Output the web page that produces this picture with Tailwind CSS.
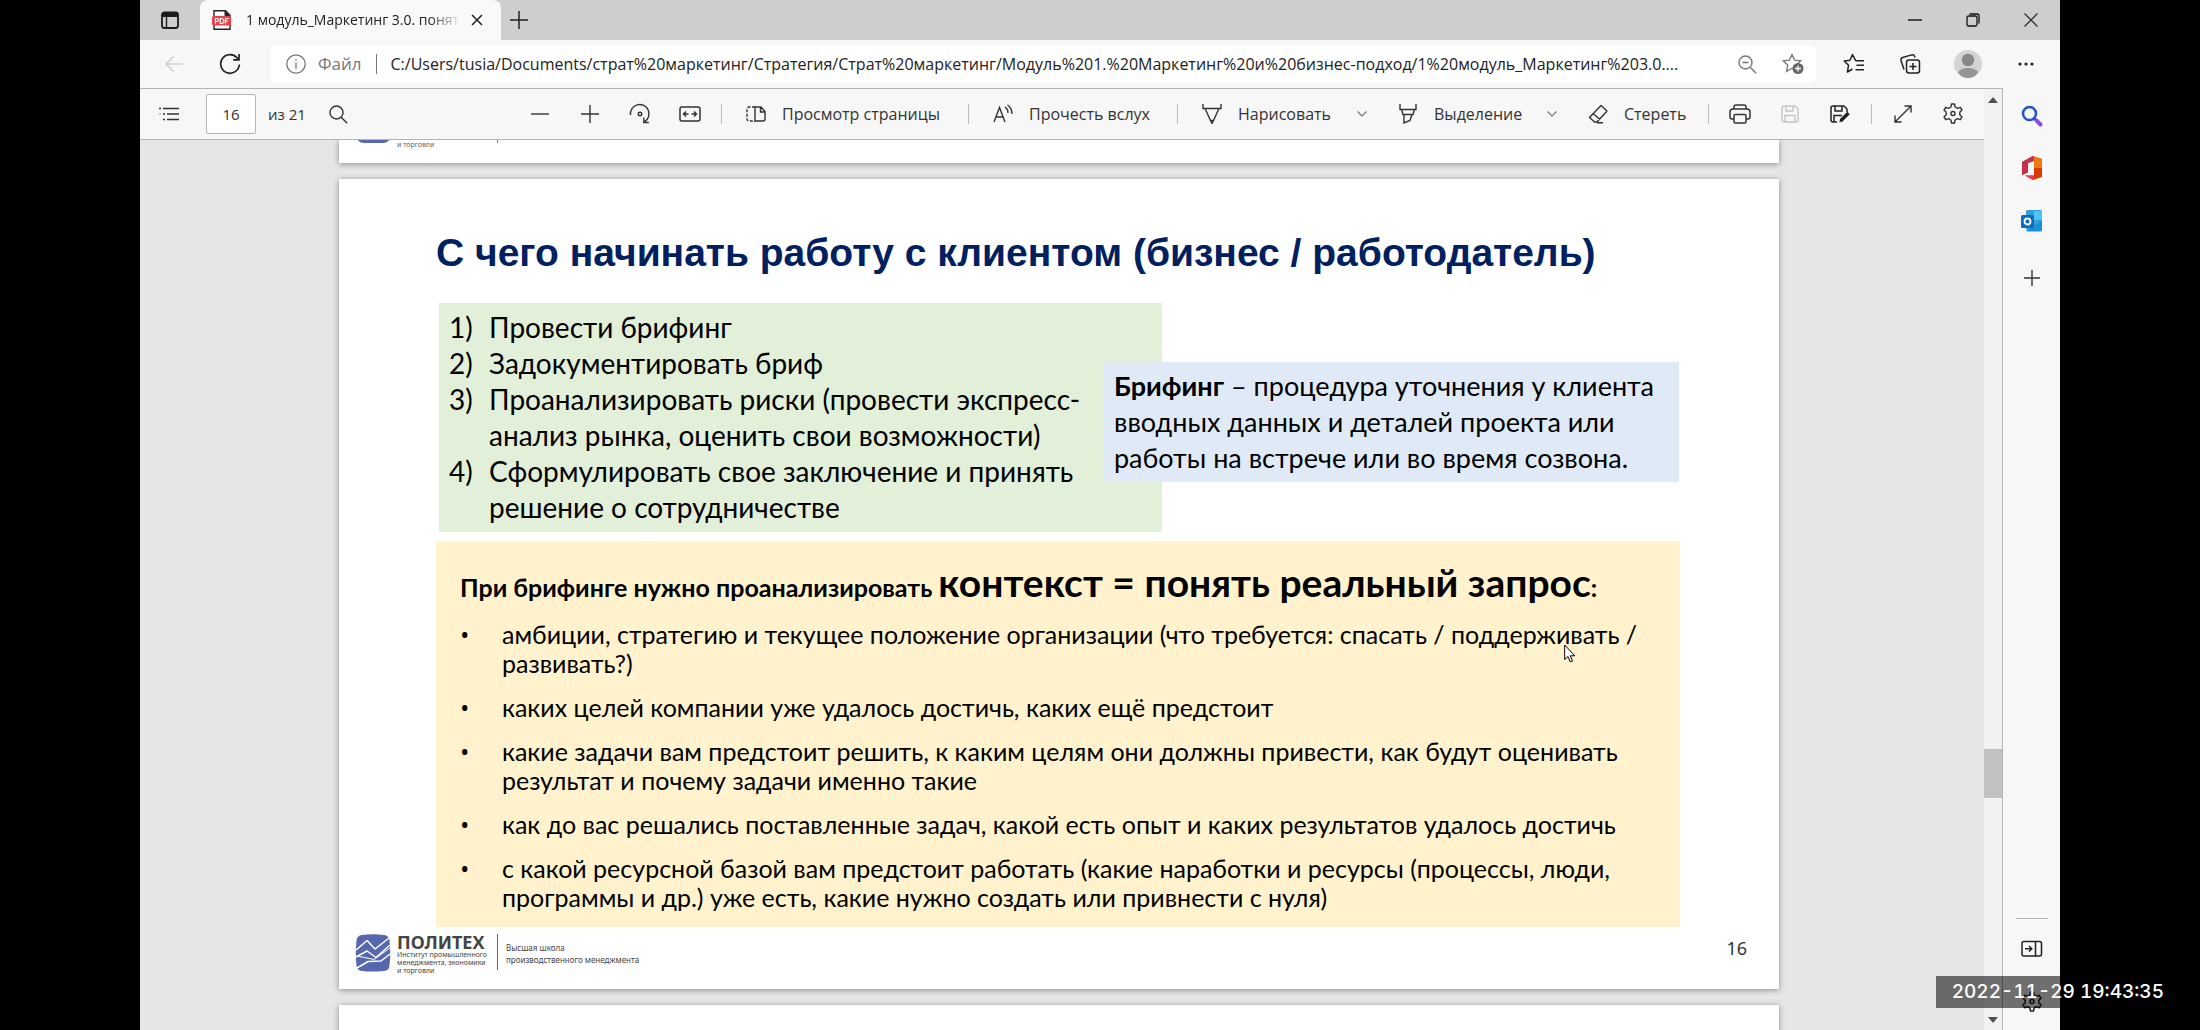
<!DOCTYPE html>
<html lang="ru">
<head>
    <meta charset="UTF-8">
    <meta name="viewport" content="width=device-width, initial-scale=1.0">
    <title>1 модуль_Маркетинг 3.0. понятие</title>
    <script src="https://cdn.jsdelivr.net/npm/@tailwindcss/browser@4"></script>
</head>
<body class="bg-black h-screen overflow-hidden px-[140px] font-['Open_Sans','Noto_Sans',sans-serif] text-black">

<div class="h-full flex flex-col bg-[#f7f7f7]">

    <!-- Tab strip -->
    <div class="h-10 shrink-0 flex items-center bg-[#cfcece]">
        <button aria-label="Вкладки" class="w-[60px] h-full flex items-center justify-center">
            <svg class="w-5 h-5" viewBox="0 0 20 20" fill="none" stroke="#1b1b1b" stroke-width="1.8"><rect x="2" y="2.5" width="16" height="15.5" rx="2.5"/><path d="M2 5h16" stroke-width="4"/><path d="M6.500 6v12" stroke-width="1.4"/></svg>
        </button>
        <div class="w-[301px] h-full rounded-t-lg bg-[#f9f9f9] flex items-center pl-3 pr-3">
            <svg class="w-5 h-5 shrink-0" viewBox="0 0 20 20"><path d="M2 .8h11.500l4.500 4.500v14H2z" fill="#fff" stroke="#222" stroke-width="1.400"/><path d="M13 .8v5h5" fill="#222" stroke="#222"/><rect x="0" y="6" width="19" height="9.500" rx="1.500" fill="#e8414c"/><path d="M3.500 13.500v-5h1.500a1.400 1.400 0 0 1 0 3H3.500M8.300 8.500v5h1a2.500 2.500 0 0 0 0-5zM13.500 13.500v-5h3M13.500 11h2.500" fill="none" stroke="#fff" stroke-width="1.200"/></svg>
            <span class="ml-3.5 flex-1 whitespace-nowrap text-sm text-[#222] mask-r-from-85%">1 модуль_Маркетинг 3.0. понят</span>
            <button aria-label="Закрыть вкладку" class="ml-1 w-6 h-6 flex items-center justify-center">
                <svg class="w-3 h-3" viewBox="0 0 12 12" stroke="#222" stroke-width="1.500"><path d="M1 1l10 10M11 1L1 11"/></svg>
            </button>
        </div>
        <button aria-label="Новая вкладка" class="w-9 h-full flex items-center justify-center">
            <svg class="w-[18px] h-[18px]" viewBox="0 0 18 18" stroke="#222" stroke-width="1.500"><path d="M9 0v18M0 9h18"/></svg>
        </button>
        <div class="ml-auto flex h-full">
            <button aria-label="Свернуть" class="w-[58px] flex items-center justify-center"><svg class="w-3.5 h-3.5" viewBox="0 0 14 14" stroke="#111" stroke-width="1.400"><path d="M0 7h14"/></svg></button>
            <button aria-label="Восстановить" class="w-[58px] flex items-center justify-center"><svg class="w-3.5 h-3.5" viewBox="0 0 14 14" fill="none" stroke="#111" stroke-width="1.300"><rect x="1" y="3" width="10" height="10" rx="1.500"/><path d="M3.500 1h7.500a2 2 0 0 1 2 2v7.500"/></svg></button>
            <button aria-label="Закрыть" class="w-[58px] flex items-center justify-center"><svg class="w-3.5 h-3.5" viewBox="0 0 14 14" stroke="#333" stroke-width="1.300"><path d="M.5.5l13 13M13.500.5l-13 13"/></svg></button>
        </div>
    </div>

    <!-- Address bar -->
    <div class="h-12 shrink-0 flex items-center">
        <button aria-label="Назад" class="ml-1.5 w-14 h-full flex items-center justify-center">
            <svg class="w-5 h-5" viewBox="0 0 20 20" fill="none" stroke="#d2d2d2" stroke-width="1.500"><path d="M19 10H2M9.500 2.500L2 10l7.500 7.500"/></svg>
        </button>
        <button aria-label="Обновить" class="w-14 h-full flex items-center justify-center">
            <svg class="w-[22px] h-[22px]" viewBox="0 0 22 22" fill="none" stroke="#222" stroke-width="1.700"><path d="M20.300 11.500A9.300 9.300 0 1 1 18 4.800l1.500 1.500"/><path d="M20 1v5.800h-5.800"/></svg>
        </button>
        <div class="ml-3 flex-1 min-w-0 h-[38px] rounded-md bg-white flex items-center pl-4 text-base">
            <svg class="w-5 h-5 shrink-0" viewBox="0 0 20 20" fill="none" stroke="#777" stroke-width="1.300"><circle cx="10" cy="10" r="9.200"/><path d="M10 8.500V15M10 5v1.600"/></svg>
            <span class="ml-3 text-[17px] text-[#777]">Файл</span>
            <span class="mx-3.5 w-px h-5 bg-[#777]"></span>
            <input aria-label="Адрес" class="flex-1 min-w-0 outline-none text-[#222] text-ellipsis" value="C:/Users/tusia/Documents/страт%20маркетинг/Стратегия/Страт%20маркетинг/Модуль%201.%20Маркетинг%20и%20бизнес-подход/1%20модуль_Маркетинг%203.0....">
            <button aria-label="Масштаб" class="w-[46px] flex justify-center">
                <svg class="w-[19px] h-[19px]" viewBox="0 0 19 19" fill="none" stroke="#777" stroke-width="1.400"><circle cx="7.500" cy="7.500" r="6.500"/><path d="M4.500 7.500h6M12.200 12.200l6 6"/></svg>
            </button>
            <button aria-label="Добавить в избранное" class="w-[46px] flex justify-center">
                <svg class="w-[22px] h-[22px]" viewBox="0 0 22 22"><path d="M10 1.500l2.600 5.600 6.200.7-4.600 4.200 1.200 6L10 15.200 4.500 18.500l1.300-6.300L1.200 7.800l6.200-.7z" fill="none" stroke="#777" stroke-width="1.300"/><circle cx="16" cy="15.500" r="5.500" fill="#666"/><path d="M16 12.500v6M13 15.500h6" stroke="#fff" stroke-width="1.300"/></svg>
            </button>
        </div>
        <button aria-label="Избранное" class="ml-2.5 w-[56px] h-full flex items-center justify-center">
            <svg class="w-[22px] h-[22px]" viewBox="0 0 22 22" fill="none" stroke="#222" stroke-width="1.500" stroke-linejoin="round"><path d="M12.800 7.800L9.500 1.500 7 7.300l-5.800.7 4.300 4.300L4.400 19l5-3"/><path d="M12.500 7.800h8.500M13.500 12.300H21M12.500 16.800h8.500"/></svg>
        </button>
        <button aria-label="Коллекции" class="w-[56px] h-full flex items-center justify-center">
            <svg class="w-[22px] h-[22px]" viewBox="0 0 22 22" fill="none" stroke="#222" stroke-width="1.500"><rect x="7.500" y="7" width="13" height="13" rx="2.500"/><path d="M14 10v7M10.500 13.500h7M5 16.500L2 7.500a2.500 2.500 0 0 1 1.700-3l9-2.600a2.500 2.500 0 0 1 3 1.600l.3 1"/></svg>
        </button>
        <button aria-label="Профиль" class="w-[60px] h-full flex items-center justify-center">
            <svg class="w-7 h-7" viewBox="0 0 28 28"><circle cx="14" cy="14" r="14" fill="#d6d4d2"/><circle cx="14" cy="10" r="6.200" fill="#8a8886"/><path d="M4 22.500Q6 18 14 18t10 4.500Q20 28 14 28T4 22.500z" fill="#979593"/></svg>
        </button>
        <button aria-label="Меню" class="w-14 h-full mr-1.5 flex items-center justify-center">
            <svg class="w-4 h-1" viewBox="0 0 16 4" fill="#222"><circle cx="2" cy="2" r="1.600"/><circle cx="8" cy="2" r="1.600"/><circle cx="14" cy="2" r="1.600"/></svg>
        </button>
    </div>

    <div class="flex-1 min-h-0 flex">

        <!-- PDF viewer -->
        <div class="flex-1 min-w-0 flex border-t border-r border-[#b5b5b5]">
            <div class="flex-1 min-w-0 flex flex-col">

                <!-- Viewer toolbar -->
                <div class="h-[51px] shrink-0 flex items-center border-b border-[#b5b5b5] pr-1.5 text-base text-[#333]">
                    <button aria-label="Содержание" class="ml-1 w-[50px] flex justify-center">
                        <svg class="w-[22px] h-4" viewBox="0 0 22 16" stroke="#333" stroke-width="1.500"><path d="M5 2.500h16M9 8h12M9 13.500h12M1 2.500h2M5 8h2M5 13.500h2"/><path d="M1 8h2" stroke-opacity=".3"/></svg>
                    </button>
                    <input aria-label="Страница" class="ml-3 w-[50px] h-10 rounded-xs border border-[#b5b5b5] bg-white text-center text-[15px]" value="16">
                    <span class="ml-3 text-[15px] whitespace-nowrap">из 21</span>
                    <button aria-label="Поиск" class="ml-2 w-[50px] flex justify-center">
                        <svg class="w-[19px] h-[19px]" viewBox="0 0 19 19" fill="none" stroke="#333" stroke-width="1.400"><circle cx="7.500" cy="7.500" r="6.500"/><path d="M12.200 12.200l6 6"/></svg>
                    </button>

                    <div class="ml-auto flex items-center">
                        <button aria-label="Уменьшить" class="w-[50px] flex justify-center"><svg class="w-[18px] h-[18px]" viewBox="0 0 18 18" stroke="#333" stroke-width="1.400"><path d="M0 9h18"/></svg></button>
                        <button aria-label="Увеличить" class="w-[50px] flex justify-center"><svg class="w-[18px] h-[18px]" viewBox="0 0 18 18" stroke="#333" stroke-width="1.400"><path d="M9 0v18M0 9h18"/></svg></button>
                        <button aria-label="Повернуть" class="w-[50px] flex justify-center"><svg class="w-[22px] h-[22px]" viewBox="0 0 22 22" fill="none" stroke="#333" stroke-width="1.400"><path d="M1.500 12A9.300 9.300 0 1 1 15.500 18.800M14.800 14.500v5h5"/><circle cx="11" cy="11" r="1.800"/></svg></button>
                        <button aria-label="По ширине" class="w-[50px] flex justify-center"><svg class="w-[22px] h-4" viewBox="0 0 22 16" fill="none" stroke="#333" stroke-width="1.500"><rect x="1" y="1" width="20" height="14" rx="2"/><path d="M4.500 8h5M12.500 8h5M7 5.500L4.500 8 7 10.500M15 5.500L17.500 8 15 10.500"/></svg></button>
                        <span class="ml-1.5 w-px h-5 bg-[#bbb]"></span>
                        <button class="ml-6 w-[222px] flex items-center gap-4 whitespace-nowrap">
                            <svg class="w-5 h-4" viewBox="0 0 20 16" fill="none" stroke="#333" stroke-width="1.400"><path d="M9 1h6l4 4.500V13a2 2 0 0 1-2 2H9zM14.500 1v5H19"/><path d="M9 1H3a2 2 0 0 0-2 2v10a2 2 0 0 0 2 2h6" stroke-dasharray="3 1.500"/></svg>
                            Просмотр страницы
                        </button>
                        <span class="w-px h-5 bg-[#bbb]"></span>
                        <button class="ml-6 w-[184px] flex items-center gap-4 whitespace-nowrap">
                            <svg class="w-5 h-5" viewBox="0 0 20 20" fill="none" stroke="#333" stroke-width="1.400"><path d="M1 18L6.500 3.500 12 18M3 13h7M12 3q3 2 3 6M14.500 1q4.500 3 4.500 9"/></svg>
                            Прочесть вслух
                        </button>
                        <span class="w-px h-5 bg-[#bbb]"></span>
                        <button class="ml-6 w-[148px] flex items-center gap-4 whitespace-nowrap">
                            <svg class="w-5 h-5" viewBox="0 0 20 20" fill="none" stroke="#333" stroke-width="1.400"><path d="M1 0v4.500h18V0M3 4.500l5.500 12h3l5.500-12M8.500 16.500l1.500 3 1.500-3"/></svg>
                            Нарисовать
                        </button>
                        <button aria-label="Параметры рисования" class="w-6 flex justify-center"><svg class="w-2.5 h-1.5" viewBox="0 0 10 6" fill="none" stroke="#777" stroke-width="1.200"><path d="M.5.5L5 5 9.500.5"/></svg></button>
                        <button class="ml-6 w-[142px] flex items-center gap-4 whitespace-nowrap">
                            <svg class="w-5 h-5" viewBox="0 0 20 20" fill="none" stroke="#333" stroke-width="1.400"><path d="M2 0v5.500h16V0M3.500 5.500L5 10.500h10l1.500-5M6 10.500V19l6-2.500 2-6"/></svg>
                            Выделение
                        </button>
                        <button aria-label="Параметры выделения" class="w-6 flex justify-center"><svg class="w-2.5 h-1.5" viewBox="0 0 10 6" fill="none" stroke="#777" stroke-width="1.200"><path d="M.5.5L5 5 9.500.5"/></svg></button>
                        <button class="ml-6 w-[120px] flex items-center gap-4 whitespace-nowrap">
                            <svg class="w-5 h-5" viewBox="0 0 20 20" fill="none" stroke="#333" stroke-width="1.400" stroke-linejoin="round"><path d="M13 1.500l6 5.500L9 18H6.500l-5-4.500zM5 9.500l7 6M9 18.800h6"/></svg>
                            Стереть
                        </button>
                        <span class="w-px h-5 bg-[#bbb]"></span>
                        <button aria-label="Печать" class="ml-1.5 w-[50px] flex justify-center"><svg class="w-[22px] h-5" viewBox="0 0 22 20" fill="none" stroke="#333" stroke-width="1.500"><path d="M5 15H3a2 2 0 0 1-2-2V8a3 3 0 0 1 3-3h14a3 3 0 0 1 3 3v5a2 2 0 0 1-2 2h-2"/><path d="M5 5V3a2 2 0 0 1 2-2h8a2 2 0 0 1 2 2v2"/><rect x="5" y="10.500" width="12" height="8.500" rx="1.500"/></svg></button>
                        <button aria-label="Сохранить" class="w-[50px] flex justify-center"><svg class="w-[18px] h-[18px]" viewBox="0 0 18 18" fill="none" stroke="#c4c4c4" stroke-width="1.400"><path d="M1 3a2 2 0 0 1 2-2h11l3 3v11a2 2 0 0 1-2 2H3a2 2 0 0 1-2-2zM5 1v5h7V1M4 17v-6.500h10V17"/></svg></button>
                        <button aria-label="Сохранить как" class="w-[50px] flex justify-center"><svg class="w-5 h-[18px]" viewBox="0 0 20 18" fill="none" stroke="#222" stroke-width="1.500"><path d="M7 17H3a2 2 0 0 1-2-2V3a2 2 0 0 1 2-2h11l3 3v3M5 1v5h7V1M4 17v-6.500h8"/><path d="M18.500 8L11 15.500" stroke-width="3.500"/><path d="M10.500 13.500l-1.300 4 4-1.500z" fill="#222" stroke="none"/></svg></button>
                        <span class="ml-1.5 w-px h-5 bg-[#bbb]"></span>
                        <button aria-label="Во весь экран" class="ml-1.5 w-[50px] flex justify-center"><svg class="w-[18px] h-[18px]" viewBox="0 0 18 18" fill="none" stroke="#333" stroke-width="1.400"><path d="M1 17L17 1M10.500 1H17v6.500M1 10.500V17h6.500"/></svg></button>
                        <button aria-label="Настройки" class="w-[50px] flex justify-center"><svg class="w-[22px] h-[22px]" viewBox="0 0 22 22" fill="none" stroke="#333" stroke-width="1.400" stroke-linejoin="round"><path d="M9.500 1h3l.6 3 2.300 1.300 2.900-1 1.700 2.800L17.800 9.200v2.600l2.200 2.100-1.700 2.800-2.900-1-2.300 1.300-.6 3h-3l-.6-3-2.300-1.300-2.900 1L2 13.900l2.200-2.100V9.200L2 7.100l1.700-2.800 2.900 1L8.900 4z"/><circle cx="11" cy="10.500" r="2"/></svg></button>
                    </div>
                </div>

                <!-- Pages -->
                <div class="flex-1 min-h-0 overflow-hidden bg-[#e6e6e6] pr-1.5 flex flex-col items-center gap-4">
                    <div class="w-full max-w-[1440px] h-[23px] shrink-0 bg-white shadow-[0_1px_6px_rgba(0,0,0,0.4)] overflow-hidden flex items-end">
                        <div class="pb-[14px] flex items-end pl-[17px] font-['Noto_Sans',sans-serif]">
                            <span class="mb-1.5 w-[35px] h-9 rounded-lg bg-[#5667b0]"></span>
                            <span class="ml-1.5 w-[100px] text-[7px] leading-2 text-[#666]">и торговли</span>
                            <span class="mb-1.5 w-px h-9 bg-[#777]"></span>
                        </div>
                    </div>

                    <div class="w-full max-w-[1440px] h-[810px] shrink-0 bg-white shadow-[0_1px_6px_rgba(0,0,0,0.4)] flex flex-col pt-[50px]">
                        <h1 class="ml-[97px] text-[39px] leading-12 font-bold text-[#002060] whitespace-nowrap font-['Liberation_Sans',sans-serif]">С чего начинать работу с клиентом (бизнес / работодатель)</h1>

                        <div class="mt-[26px] ml-[100px] flex items-start font-['Lato','Open_Sans',sans-serif] leading-9">
                            <ol class="w-[723px] h-[229px] shrink-0 bg-[#e2efd9] py-1.5 px-2.5 text-[28px] leading-9">
                                <li class="flex"><span class="w-10">1)</span>Провести брифинг</li>
                                <li class="flex"><span class="w-10">2)</span>Задокументировать бриф</li>
                                <li class="flex"><span class="w-10">3)</span><span class="whitespace-nowrap">Проанализировать риски (провести экспресс-<br>анализ рынка, оценить свои возможности)</span></li>
                                <li class="flex"><span class="w-10">4)</span><span class="whitespace-nowrap">Сформулировать свое заключение и принять<br>решение о сотрудничестве</span></li>
                            </ol>
                            <p class="relative -ml-[58px] mt-[59px] w-[575px] bg-[#dfeaf6] py-1.5 pl-2.5 whitespace-nowrap text-[27px] leading-9"><b>Брифинг</b> – процедура уточнения у клиента<br>вводных данных и деталей проекта или<br>работы на встрече или во время созвона.</p>
                        </div>

                        <div class="mt-[9px] ml-[97px] w-[1244px] h-[386px] bg-[#fff2cc] pt-4 pl-6 whitespace-nowrap font-['Lato','Open_Sans',sans-serif]">
                            <h2 class="text-[25px] leading-[50px] font-bold">При брифинге нужно проанализировать <span class="text-[39px]">контекст = понять реальный запрос</span>:</h2>
                            <ul class="mt-2 flex flex-col gap-[15px] text-[25px] leading-[29px]">
                                <li class="flex"><span class="w-10.5 font-['Open_Sans',sans-serif]">•</span><span>амбиции, стратегию и текущее положение организации (что требуется: спасать / поддерживать /<br>развивать?)</span></li>
                                <li class="flex"><span class="w-10.5 font-['Open_Sans',sans-serif]">•</span>каких целей компании уже удалось достичь, каких ещё предстоит</li>
                                <li class="flex"><span class="w-10.5 font-['Open_Sans',sans-serif]">•</span><span>какие задачи вам предстоит решить, к каким целям они должны привести, как будут оценивать<br>результат и почему задачи именно такие</span></li>
                                <li class="flex"><span class="w-10.5 font-['Open_Sans',sans-serif]">•</span>как до вас решались поставленные задач, какой есть опыт и каких результатов удалось достичь</li>
                                <li class="flex"><span class="w-10.5 font-['Open_Sans',sans-serif]">•</span><span>с какой ресурсной базой вам предстоит работать (какие наработки и ресурсы (процессы, люди,<br>программы и др.) уже есть, какие нужно создать или привнести с нуля)</span></li>
                            </ul>
                        </div>

                        <!-- Slide footer -->
                        <div class="mt-[7px] px-4 flex items-start font-['Noto_Sans',sans-serif] text-[#444]">
                            <svg class="w-9 h-[38px]" viewBox="0 0 36 38"><path d="M7 1Q18-.5 29 1q5 .5 5.500 5.500Q36 19 34.500 31.500 34 36.500 29 37q-11 1-22 0-5-.5-5.500-5.500Q0 19 1.500 6.500 2 1.500 7 1z" fill="#5667b0"/><path d="M1 16L12 6.500l8 8.500L34 4M1 23l11-6 9 6.500L35 11M2 34l11-6.500 13-.5 9-7" fill="none" stroke="#fff" stroke-width="1.500" stroke-linejoin="round"/><path d="M1 22l9 1.500 9 2L35 14" fill="none" stroke="#fff" stroke-width="1"/></svg>
                            <div class="ml-1.5 w-[100px] text-[7px] leading-2 whitespace-nowrap">
                                <b class="block text-lg leading-[17px]">ПОЛИТЕХ</b>
                                Институт промышленного<br>менеджмента, экономики<br>и торговли
                            </div>
                            <span class="w-px h-9 bg-[#666]"></span>
                            <p class="ml-2 mt-2 text-[8px] leading-3">Высшая школа<br>производственного менеджмента</p>
                            <span class="ml-auto mr-4 mt-1 text-[18px] leading-5 text-[#333]">16</span>
                        </div>
                    </div>

                    <div class="w-full max-w-[1440px] h-[810px] shrink-0 bg-white shadow-[0_1px_6px_rgba(0,0,0,0.4)]"></div>
                </div>
            </div>

            <!-- Scrollbar -->
            <div class="w-[18px] bg-[#f1f1f1] flex flex-col items-center">
                <svg class="mt-2 w-2.5 h-1.5 shrink-0" viewBox="0 0 10 6" fill="#505050"><path d="M0 6l5-6 5 6z"/></svg>
                <div class="mt-auto w-full h-[49px] bg-[#c1c1c1]"></div>
                <svg class="mt-[219px] mb-[7px] w-2.5 h-1.5 shrink-0" viewBox="0 0 10 6" fill="#505050"><path d="M0 0l5 6 5-6z"/></svg>
            </div>
        </div>

        <!-- Edge sidebar -->
        <div class="w-[57px] shrink-0 flex flex-col items-center pt-4 pb-[17px]">
            <button aria-label="Поиск" class="h-6">
                <svg class="w-[22px] h-[22px]" viewBox="0 0 22 22" fill="none"><path d="M13 13l3 3" stroke="#2444b8" stroke-width="2.500"/><path d="M15.500 15.500l4 4" stroke="#8a4be0" stroke-width="4" stroke-linecap="round"/><circle cx="8.500" cy="8.500" r="6.500" stroke="#2b55cc" stroke-width="2.600"/></svg>
            </button>
            <button aria-label="Office" class="mt-7 h-6">
                <svg class="w-[22px] h-6" viewBox="0 0 22 24"><path d="M12 0l9 3v18l-9 3-8-4.500h9V5L7 7v9.500L1 19V6z" fill="#d83b01"/><path d="M12 0v5.300L7 7v9.500L1 19V6z" fill="#c4314b"/><path d="M4 19.500h9V24h-1z" fill="#e8375a"/><path d="M13 .4l8 2.600v9h-8z" fill="#f07a12"/></svg>
            </button>
            <button aria-label="Outlook" class="mt-[29px] h-6">
                <svg class="w-[22px] h-[22px]" viewBox="0 0 22 22"><rect x="5" y="0" width="16" height="20" rx="1.500" fill="#2f9fe0"/><path d="M13 1h8v9h-8z" fill="#4fc3f0"/><path d="M5 21l16-10v9a1.500 1.500 0 0 1-1.500 1.500H6z" fill="#1890d8"/><rect x="0" y="5" width="13" height="13" rx="1.500" fill="#0f6cbd"/><circle cx="6.500" cy="11.500" r="3" fill="none" stroke="#fff" stroke-width="1.800"/></svg>
            </button>
            <button aria-label="Добавить" class="mt-[33px] h-6">
                <svg class="w-4 h-4" viewBox="0 0 16 16" stroke="#333" stroke-width="1.400"><path d="M8 0v16M0 8h16"/></svg>
            </button>
            <hr class="mt-auto w-8 border-[#b5b5b5]">
            <button aria-label="Скрыть панель" class="mt-5 h-5">
                <svg class="w-[22px] h-[18px]" viewBox="0 0 22 18" fill="none" stroke="#222" stroke-width="1.500"><rect x="1" y="1.500" width="19.500" height="14.500" rx="2"/><path d="M14.500 1.500V16M4 8.700h6M8 6l2.800 2.700L8 11.500"/></svg>
            </button>
            <button aria-label="Настройки" class="mt-8 h-[22px]">
                <svg class="w-[22px] h-[22px]" viewBox="0 0 22 22" fill="none" stroke="#222" stroke-width="1.500" stroke-linejoin="round"><path d="M9.500 1h3l.6 3 2.300 1.300 2.900-1 1.700 2.800L17.800 9.200v2.600l2.200 2.100-1.700 2.800-2.900-1-2.300 1.300-.6 3h-3l-.6-3-2.300-1.300-2.900 1L2 13.900l2.200-2.100V9.200L2 7.100l1.700-2.800 2.900 1L8.900 4z"/><circle cx="11" cy="10.500" r="2"/></svg>
            </button>
        </div>
    </div>
</div>

<!-- Recording overlay: pointer and time stamp -->
<svg class="absolute left-[1564px] top-[644px] w-3 h-[19px]" viewBox="0 0 12 19"><path d="M.7 1v14.500l3.300-3 2.300 5.500 2.200-1-2.200-5.200h4.500z" fill="#fff" stroke="#000"/></svg>
<time class="absolute right-6 bottom-[22px] h-8 pl-4 pr-3 bg-black/55 text-white font-medium text-[19px] leading-8 whitespace-nowrap tabular-nums font-['Inter',sans-serif]">2022-11-29 19:43:35</time>

</body>
</html>
